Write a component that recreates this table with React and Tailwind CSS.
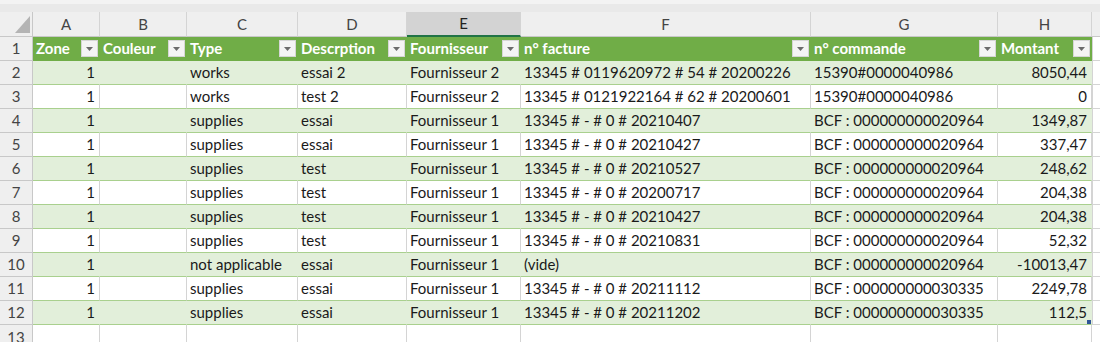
import React from 'react'

const COLS = ['A', 'B', 'C', 'D', 'E', 'F', 'G', 'H']
const HEAD = ['Zone', 'Couleur', 'Type', 'Descrption', 'Fournisseur', 'n° facture', 'n° commande', 'Montant']

const ROWS = [
  ['1', '', 'works', 'essai 2', 'Fournisseur 2', '13345 # 0119620972 # 54 # 20200226', '15390#0000040986', '8050,44'],
  ['1', '', 'works', 'test 2', 'Fournisseur 2', '13345 # 0121922164 # 62 # 20200601', '15390#0000040986', '0'],
  ['1', '', 'supplies', 'essai', 'Fournisseur 1', '13345 # - # 0 # 20210407', 'BCF : 000000000020964', '1349,87'],
  ['1', '', 'supplies', 'essai', 'Fournisseur 1', '13345 # - # 0 # 20210427', 'BCF : 000000000020964', '337,47'],
  ['1', '', 'supplies', 'test', 'Fournisseur 1', '13345 # - # 0 # 20210527', 'BCF : 000000000020964', '248,62'],
  ['1', '', 'supplies', 'test', 'Fournisseur 1', '13345 # - # 0 # 20200717', 'BCF : 000000000020964', '204,38'],
  ['1', '', 'supplies', 'test', 'Fournisseur 1', '13345 # - # 0 # 20210427', 'BCF : 000000000020964', '204,38'],
  ['1', '', 'supplies', 'test', 'Fournisseur 1', '13345 # - # 0 # 20210831', 'BCF : 000000000020964', '52,32'],
  ['1', '', 'not applicable', 'essai', 'Fournisseur 1', '(vide)', 'BCF : 000000000020964', '-10013,47'],
  ['1', '', 'supplies', 'essai', 'Fournisseur 1', '13345 # - # 0 # 20211112', 'BCF : 000000000030335', '2249,78'],
  ['1', '', 'supplies', 'essai', 'Fournisseur 1', '13345 # - # 0 # 20211202', 'BCF : 000000000030335', '112,5'],
]

const GRID = 'grid grid-cols-[33px_67px_87px_111px_109px_114px_290px_187px_94px_8px]'
const RIGHT = [0, 7]

function FilterBtn() {
  return (
    <span className="absolute right-[2px] top-[3px] w-[17px] h-[17px] bg-[#f4f4f4] border border-[#d6d6d6] flex items-center justify-center">
      <svg width="7" height="4" viewBox="0 0 7 4"><path d="M0 0h7L3.5 4z" fill="#6b6b6b" /></svg>
    </span>
  )
}

export default function App() {
  return (
    <div className="w-[1100px] h-[342px] overflow-hidden bg-white text-[15px] text-[#1a1a1a]" style={{ fontFamily: 'Lato, "Open Sans", sans-serif' }}>
      {/* formula bar edge */}
      <div className="h-[12px] bg-[#e9e9e9] border-t-[4px] border-[#f3f3f3]" />

      {/* column letters */}
      <div className={`${GRID} h-[25px] bg-[#efefef] text-[#444]`}>
        <div className="relative border-r border-b border-[#c8c8c8]">
          <svg className="absolute right-[2px] bottom-[3px]" width="15" height="17" viewBox="0 0 15 17"><path d="M15 0v17H0z" fill="#b4b4b4" /></svg>
        </div>
        {COLS.map(c => (
          <div key={c}
               className={`flex items-center justify-center border-r border-[#d4d4d4] ${c === 'E' ? 'bg-[#d3d3d3] border-b-2 border-b-[#217346] text-[#222]' : 'border-b border-b-[#c8c8c8]'}`}>
            {c}
          </div>
        ))}
        <div className="border-b border-[#c8c8c8]" />
      </div>

      {/* table header */}
      <div className={`${GRID} h-[24px]`}>
        <div className="flex items-center justify-center bg-[#efefef] text-[#444] border-r border-b border-[#c8c8c8]">1</div>
        {HEAD.map(h => (
          <div key={h} className="relative bg-[#70ad47] text-white font-bold flex items-center pl-[3px] overflow-hidden whitespace-nowrap border-b border-[#70ad47]">
            {h}
            <FilterBtn />
          </div>
        ))}
        <div className="border-l border-b border-[#d4d4d4]" />
      </div>

      {ROWS.map((r, i) => {
        const band = i % 2 === 0
        return (
          <div key={i} className={`${GRID} h-[24px]`}>
            <div className="flex items-center justify-center bg-[#efefef] text-[#444] border-r border-b border-[#c8c8c8]">{i + 2}</div>
            {r.map((v, j) => (
              <div key={j}
                   className={`relative flex items-center whitespace-nowrap overflow-visible border-b border-b-[#a9d08e] ${band ? 'bg-[#e2efda] border-r border-r-[#e2efda]' : 'bg-white border-r border-r-[#d4d4d4]'} ${RIGHT.includes(j) ? 'justify-end pr-[4px]' : 'pl-[3px]'}`}>
                {v}
                {i === ROWS.length - 1 && j === 7 && (
                  <span className="absolute right-[0px] bottom-[0px] w-[4px] h-[4px] bg-[#2f5597]" />
                )}
              </div>
            ))}
            <div className="border-l border-b border-[#d4d4d4]" />
          </div>
        )
      })}

      {/* row 13 */}
      <div className={`${GRID} h-[24px]`}>
        <div className="flex items-center justify-center bg-[#efefef] text-[#444] border-r border-[#c8c8c8]">13</div>
        {COLS.map(c => <div key={c} className="border-r border-[#d4d4d4]" />)}
        <div />
      </div>
    </div>
  )
}
